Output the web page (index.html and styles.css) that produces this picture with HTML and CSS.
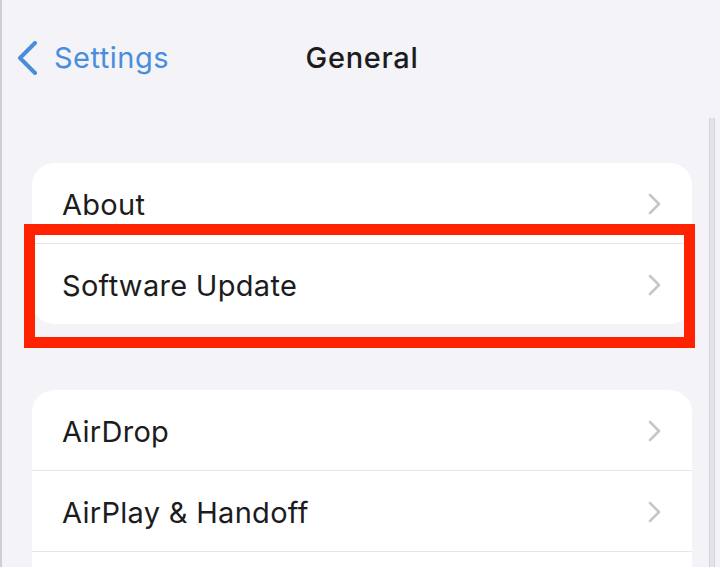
FILE: index.html
```html
<!DOCTYPE html>
<html>
<head>
<meta charset="utf-8">
<link rel="stylesheet" href="styles.css">
</head>
<body>
<div class="screen">
  <header class="nav">
    <div class="back">
      <svg class="back-icon" width="22" height="34" viewBox="0 0 22 34"><path d="M19 2 L4 17 L19 32" fill="none" stroke="#4a8edb" stroke-width="4" stroke-linecap="round" stroke-linejoin="round"/></svg>
      <span class="back-label">Settings</span>
    </div>
    <div class="title">General</div>
  </header>

  <section class="group group-first">
    <div class="row"><span class="label">About</span><svg class="chev" width="14" height="22" viewBox="0 0 14 22"><path d="M2 2 L11 11 L2 20" fill="none" stroke="#c6c6cb" stroke-width="2.6" stroke-linecap="round" stroke-linejoin="round"/></svg></div>
    <div class="row"><span class="label">Software Update</span><svg class="chev" width="14" height="22" viewBox="0 0 14 22"><path d="M2 2 L11 11 L2 20" fill="none" stroke="#c6c6cb" stroke-width="2.6" stroke-linecap="round" stroke-linejoin="round"/></svg></div>
  </section>

  <section class="group group-second">
    <div class="row"><span class="label">AirDrop</span><svg class="chev" width="14" height="22" viewBox="0 0 14 22"><path d="M2 2 L11 11 L2 20" fill="none" stroke="#c6c6cb" stroke-width="2.6" stroke-linecap="round" stroke-linejoin="round"/></svg></div>
    <div class="row"><span class="label">AirPlay &amp; Handoff</span><svg class="chev" width="14" height="22" viewBox="0 0 14 22"><path d="M2 2 L11 11 L2 20" fill="none" stroke="#c6c6cb" stroke-width="2.6" stroke-linecap="round" stroke-linejoin="round"/></svg></div>
    <div class="row"><span class="label"></span></div>
  </section>

  <div class="highlight"></div>
  <div class="scrollbar"></div>
</div>
</body>
</html>
```

FILE: styles.css
```css
html, body {
  margin: 0;
  padding: 0;
  background: #f2f2f7;
}
body {
  font-family: "Inter", "Liberation Sans", sans-serif;
  color: #1c1c1e;
}
.screen {
  position: relative;
  width: 720px;
  height: 567px;
  overflow: hidden;
  box-sizing: border-box;
  border-left: 2px solid #cfcfd3;
  background: #f3f3f8;
}
.nav {
  position: relative;
  height: 116px;
  display: flex;
  align-items: flex-start;
}
.back {
  display: flex;
  align-items: center;
  padding-left: 14px;
  padding-top: 41px;
  gap: 16px;
}
.back-label {
  color: #4a8edb;
  font-size: 29px;
  line-height: 34px;
  letter-spacing: 0.5px;
}
.title {
  position: absolute;
  left: 0;
  right: 0;
  top: 41px;
  text-align: center;
  font-size: 29px;
  line-height: 34px;
  font-weight: 500;
  letter-spacing: 0.7px;
  padding-left: 2px;
}
.group {
  margin-left: 30px;
  margin-right: 28px;
  background: #ffffff;
  border-radius: 22px;
  overflow: hidden;
}
.group-first {
  margin-top: 47px;
}
.group-second {
  margin-top: 66px;
}
.row {
  height: 80px;
  display: flex;
  align-items: center;
  justify-content: space-between;
  padding-left: 30px;
  padding-right: 30px;
}
.row + .row {
  border-top: 1px solid #e6e6ea;
}
.label {
  font-size: 29px;
  letter-spacing: 0.3px;
  padding-top: 3px;
}
.chev {
  margin-top: 2px;
}
.highlight {
  position: absolute;
  left: 22px;
  top: 224px;
  width: 671px;
  height: 124px;
  box-sizing: border-box;
  border: 11px solid #fe2200;
}
.scrollbar {
  position: absolute;
  left: 707px;
  top: 118px;
  width: 4px;
  bottom: 0;
  background: #e4e4e8;
  border-left: 1px solid #d6d6da;
  border-right: 1px solid #d6d6da;
}
```
